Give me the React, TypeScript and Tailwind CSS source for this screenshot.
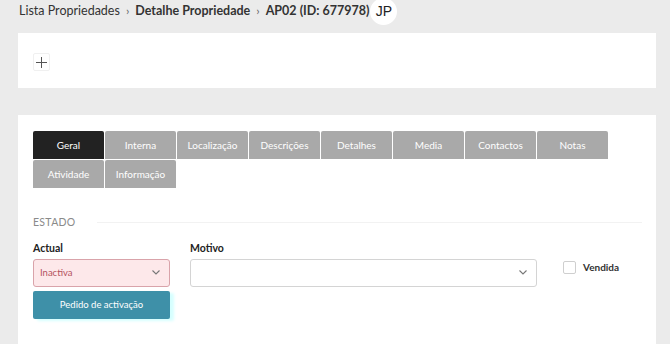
import React from "react";

const row1 = ["Geral", "Interna", "Localização", "Descrições", "Detalhes", "Media", "Contactos", "Notas"];
const row2 = ["Atividade", "Informação"];

function Tab({ label, active }: { label: string; active?: boolean }) {
  return (
    <div
      className={
        "w-[71px] h-[28px] flex items-center justify-center text-[10px] rounded-t-[2px] " +
        (active ? "bg-[#222222] text-white" : "bg-[#a9a9a9] text-white")
      }
    >
      {label}
    </div>
  );
}

function Chevron({ color }: { color: string }) {
  return (
    <svg width="8" height="5" viewBox="0 0 8 5" fill="none">
      <polyline points="0.5,0.5 4,4 7.5,0.5" stroke={color} strokeWidth="1.1" />
    </svg>
  );
}

export default function App() {
  return (
    <div className="w-[670px] h-[344px] overflow-hidden bg-[#ebebeb] font-['Lato',sans-serif] text-[#333]">
      {/* breadcrumb */}
      <div className="h-[26px] flex items-center pl-[19px] text-[12.5px] text-[#333] -mt-[2px]">
        <span>Lista Propriedades</span>
        <span className="mx-[6px] text-[12px] text-[#666]">›</span>
        <span className="font-bold">Detalhe Propriedade</span>
        <span className="mx-[6px] text-[12px] text-[#666]">›</span>
        <span className="font-bold">AP02 (ID: 677978)</span>
        <div className="ml-[1px] w-[27px] h-[27px] rounded-full bg-white flex items-center justify-center font-['Liberation_Sans',sans-serif] text-[14px] text-[#222]">
          JP
        </div>
      </div>

      {/* panel 1 */}
      <div className="ml-[18px] mr-[14px] mt-[9px] h-[55px] bg-white pl-[15px] pt-[20px]">
        <div className="w-[17px] h-[18px] border border-[#f0f0f0] rounded-[2px] flex items-center justify-center">
          <svg width="11" height="11" viewBox="0 0 11 11">
            <line x1="5.5" y1="0" x2="5.5" y2="11" stroke="#555" strokeWidth="1" />
            <line x1="0" y1="5.5" x2="11" y2="5.5" stroke="#555" strokeWidth="1" />
          </svg>
        </div>
      </div>

      {/* panel 2 */}
      <div className="ml-[18px] mr-[14px] mt-[27px] h-[300px] bg-white pl-[15px] pr-[14px] pt-[16px]">
        <div className="flex flex-col gap-[1px]">
          <div className="flex gap-[1px]">
            {row1.map((t, i) => (
              <Tab key={t} label={t} active={i === 0} />
            ))}
          </div>
          <div className="flex gap-[1px]">
            {row2.map((t) => (
              <Tab key={t} label={t} />
            ))}
          </div>
        </div>

        <div className="mt-[27px] flex items-center">
          <span className="text-[10.5px] text-[#8a8a8a] tracking-[0.3px]">ESTADO</span>
          <div className="flex-1 ml-[21px] h-px bg-[#f2f2f2]" />
        </div>

        <div className="mt-[10px] flex">
          <div className="w-[137px] flex flex-col">
            <div className="text-[10.5px] font-bold text-[#222] h-[14px] leading-[14px]">Actual</div>
            <div className="mt-[4px] h-[28px] bg-[#fde8ea] border border-[#d9a3aa] rounded-[3px] flex items-center justify-between pl-[6px] pr-[9px]">
              <span className="text-[9.5px] text-[#b4525e]">Inactiva</span>
              <Chevron color="#777" />
            </div>
            <div className="mt-[4px] h-[28px] bg-[#3e90a8] rounded-[2px] flex items-center justify-center text-[9.5px] text-white shadow-[4px_2px_3px_#d6ffff]">
              Pedido de activação
            </div>
          </div>
          <div className="ml-[20px] w-[347px] flex flex-col">
            <div className="text-[10.5px] font-bold text-[#222] h-[14px] leading-[14px]">Motivo</div>
            <div className="mt-[4px] h-[28px] bg-white border border-[#d4d4d4] rounded-[3px] flex items-center justify-end pr-[9px]">
              <Chevron color="#777" />
            </div>
          </div>
          <div className="ml-[26px] mt-[20px] flex items-start">
            <div className="w-[13px] h-[13px] border border-[#cfcfcf] rounded-[2px] bg-white" />
            <span className="ml-[7px] text-[10px] font-bold text-[#333] leading-[13px]">Vendida</span>
          </div>
        </div>
      </div>
    </div>
  );
}
